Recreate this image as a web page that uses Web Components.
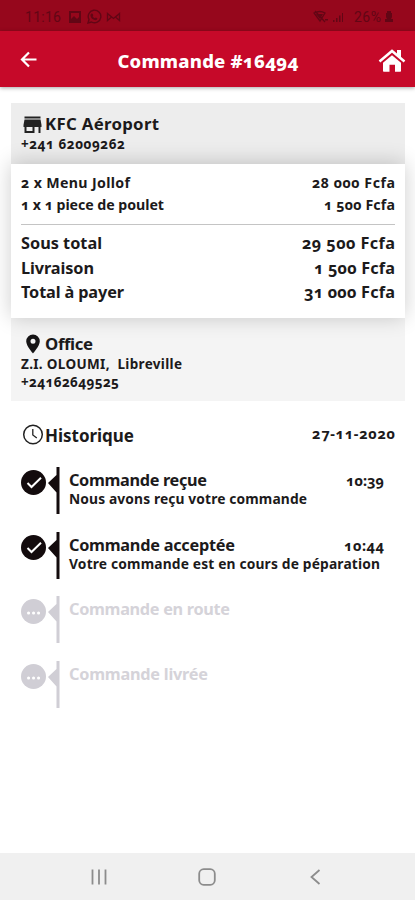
<!DOCTYPE html>
<html lang="fr">
<head>
<meta charset="utf-8">
<title>Commande</title>
<style>
body {
  margin: 0;
  background: #fff;
  color: #1c1a1b;
  font-family: "Noto Sans", "Open Sans", sans-serif;
  font-weight: 700;
  font-variant-numeric: oldstyle-nums;
}
</style>
</head>
<body>
<order-screen></order-screen>

<script>
const define = (name, html, setup) => {
  const template = document.createElement("template");
  template.innerHTML = html;

  customElements.define(name, class extends HTMLElement {
    constructor() {
      super();
      this.attachShadow({ mode: "open" });
      this.shadowRoot.appendChild(template.content.cloneNode(true));
    }

    connectedCallback() {
      if (setup) setup(this);
    }
  });
};

// Tracks the text of a span so that it covers the given width
const track = (span, width, count) => {
  span.style.letterSpacing = "0";
  const gap = (width - span.getBoundingClientRect().width) / (count - 1);
  span.style.letterSpacing = `${gap}px`;
  span.style.marginRight = `${-gap}px`;
};

define("fit-text", `
<style>
:host { display: block; flex: none; }
span { display: inline-block; white-space: pre; vertical-align: top; }
</style>
<span><slot></slot></span>
`, (el) => {
  const span = el.shadowRoot.querySelector("span");
  track(span, Number(el.getAttribute("width")), el.textContent.length);
});

define("status-bar", `
<style>
:host {
  display: flex;
  justify-content: space-between;
  align-items: center;
  box-sizing: border-box;
  height: 31px;
  padding: 2px 21px 0 25px;
  background: #96071c;
  color: #620615;
  font: 400 14px Roboto, sans-serif;
  font-variant-numeric: normal;
}
div { display: flex; align-items: center; }
svg { display: block; fill: currentColor; }
.left svg:first-of-type { margin-left: 7px; }
.left svg + svg { margin-left: 4px; }
.right svg + svg { margin: 0 10px 0 2px; }
.right fit-text + svg { margin-left: 3px; }
</style>
<div class="left">
  <fit-text width="36">11:16</fit-text>
  <svg width="14" height="14" viewBox="0 0 14 14"><path fill-rule="evenodd" d="M1 1h12v12H1zM3 3v6l3-3 3 3 2-2V3z"/></svg>
  <svg width="16" height="16" viewBox="0 0 16 16"><path d="M2 14l1-3.500A6.300 6.300 0 1 1 5.500 13z" fill="none" stroke="currentColor" stroke-width="1.400"/><path d="M5.300 4.500l1.400.2.600 1.700-.7.800q.8 1.500 2.200 2.100l.9-.8 1.700.8q-.1 1.800-2 1.900-4.600-1-5-5.300z"/></svg>
  <svg width="15" height="12" viewBox="0 0 15 12"><path d="M1.500 2.500v7l4-3.500zM13.500 2.500v7L9.500 6zM1.500 2.500l6 5 6-5M1.500 9.500l4-3.500M13.500 9.500l-4-3.500" fill="none" stroke="currentColor" stroke-width="1.300"/></svg>
</div>
<div class="right">
  <svg width="16" height="14" viewBox="0 0 16 14"><path d="M1 3q6-3 11 0L7 11zM2 1l10 11" fill="none" stroke="currentColor" stroke-width="1.300"/><path d="M3 4h7l-3 5zM12 9h3v1.500h-3z"/></svg>
  <svg width="13" height="12" viewBox="0 0 13 12"><path d="M2 9h1.500v2H2zM5 7h1.500v4H5zM8 4.500h1.500V11H8zM11 2h1v9h-1z"/></svg>
  <fit-text width="27">26%</fit-text>
  <svg width="10" height="14" viewBox="0 0 10 14"><path d="M3 1h4v2h1v4l-1 2h2v3H1V9h2L2 7V3h1z"/></svg>
</div>
`);

define("app-header", `
<style>
:host {
  display: flex;
  justify-content: space-between;
  align-items: center;
  box-sizing: border-box;
  height: 56px;
  padding: 2px 9px 0 20px;
  background: #c60929;
  color: #fff;
  font-size: 18.500px;
  font-weight: 800;
  box-shadow: 0 1px 4px rgba(0, 0, 0, .35);
}
svg { display: block; }
</style>
<svg width="18" height="18" viewBox="0 0 18 18"><path d="M16.500 8.500H2.500M9 1.500l-7 7 7 7" fill="none" stroke="#fff" stroke-width="2.200"/></svg>
<span><slot></slot></span>
<svg width="28" height="24" viewBox="0 0 28 24"><path d="M14 7.300l9 7.500V23a.8.8 0 0 1-.8.800H17v-7h-5.500v7H5.800A.8.8 0 0 1 5 23v-8.200z" fill="#fff"/><path d="M1.500 13.500L14 3l12.500 10.500" fill="none" stroke="#fff" stroke-width="2.500"/><path d="M19 2h4v8l-4-3.400z" fill="#fff"/></svg>
`, (el) => {
  track(el.shadowRoot.querySelector("span"), 181, el.textContent.length);
});

define("contact-card", `
<style>
:host {
  display: block;
  box-sizing: border-box;
  background: var(--card-bg, #f4f4f4);
  padding: var(--card-pad, 0) 10px 0;
  font-size: 13.500px;
  line-height: 18px;
}
.name {
  display: flex;
  align-items: center;
  height: 22px;
  font-size: 16.800px;
}
.icon { width: 24px; flex: none; }
::slotted(svg) { display: block; }
</style>
<div class="name"><div class="icon"><slot name="icon"></slot></div><slot name="name"></slot></div>
<slot></slot>
`);

define("price-row", `
<style>
:host {
  display: flex;
  justify-content: space-between;
  align-items: center;
  height: var(--row, 24.400px);
}
</style>
<slot></slot>
`);

define("order-summary", `
<style>
:host {
  display: block;
  position: relative;
  box-sizing: border-box;
  height: 154px;
  padding: 7px 10px 0;
  background: #fff;
  box-shadow: 0 -1px 20px rgba(0, 0, 0, .2);
  font-size: 16.300px;
}
.items { --row: 22.500px; font-size: 14.200px; }
hr { height: 1px; margin: 8px 0 6px; border: 0; background: #c4c4c4; }
</style>
<div class="items"><slot name="items"></slot></div>
<hr>
<slot></slot>
`);

define("history-step", `
<style>
:host {
  display: flex;
  height: 64.700px;
  color: #1c1a1b;
  --tone: #130b0d;
}
:host([pending]) { color: #d5d3d9; --tone: #d0ced5; }
svg { display: block; flex: none; margin-right: 9px; }
.mark { fill: var(--tone); }
.dots { display: none; }
:host([pending]) .dots { display: inline; }
:host([pending]) .check { display: none; }
.text { flex: 1; padding: 3px 21px 0 0; font-size: 13.800px; line-height: 18px; }
.head { display: flex; justify-content: space-between; height: 20px; line-height: 20px; font-size: 16.300px; }
::slotted([slot="time"]) { font-size: 14.500px; }
</style>
<svg width="39" height="47" viewBox="0 0 39 47">
  <circle class="mark" cx="12.500" cy="15.500" r="12.500"/>
  <path class="mark" d="M35.500 0H38.500V47H35.500V25.500L27 16l8.500-8z"/>
  <path class="check" d="M6.500 16l4 4L20 10.800" fill="none" stroke="#fff" stroke-width="2"/>
  <path class="dots" d="M7.500 17h.1M12.500 17h.1M17.500 17h.1" stroke="#fff" stroke-width="3" stroke-linecap="round"/>
</svg>
<div class="text">
  <div class="head"><slot name="title"></slot><slot name="time"></slot></div>
  <slot></slot>
</div>
`);

define("nav-bar", `
<style>
:host {
  display: flex;
  justify-content: center;
  align-items: center;
  gap: 90px;
  height: 47px;
  padding-right: 2px;
  background: #f0f0f0;
}
svg { display: block; fill: none; stroke: #8c8c8c; stroke-width: 1.800; }
</style>
<svg width="18" height="18" viewBox="0 0 18 18"><path d="M2.500 1.500v15M9 1.500v15M15.500 1.500v15"/></svg>
<svg width="18" height="18" viewBox="0 0 18 18"><rect x="1.200" y="1.200" width="15.600" height="15.600" rx="4.500"/></svg>
<svg width="18" height="18" viewBox="0 0 18 18"><path d="M13.500 2l-8 7 8 7"/></svg>
`);

define("order-screen", `
<style>
:host { display: flex; flex-direction: column; height: 900px; overflow: hidden; }
app-header { flex: none; }
main { flex: 1; padding: 16px 10px 0 11px; }
.shop { height: 61px; --card-bg: #ededed; --card-pad: 10px; }
.address { height: 83px; --card-pad: 15px; }
.history {
  display: flex;
  justify-content: space-between;
  align-items: center;
  height: 24px;
  margin: 22px 0 20px;
  padding: 0 10px;
  font-size: 17px;
}
.history div { display: flex; align-items: center; gap: 1px; }
.date { font-size: 14.500px; margin-bottom: 4px; }
history-step { margin-left: 10px; }
</style>
<status-bar></status-bar>
<app-header>Commande #16494</app-header>
<main>
  <contact-card class="shop">
    <svg slot="icon" width="22" height="20" viewBox="0 0 22 20"><path fill-rule="evenodd" d="M3.500 2.500h16v2h-16zM3.500 5.500h16l1 5.500v2h-1v6h-2v-6h-4v6h-10v-6h-1v-2zM5.500 13v4h6v-4z" fill="#222"/></svg>
    <fit-text slot="name" width="114">KFC Aéroport</fit-text>
    <fit-text width="104">+241 62009262</fit-text>
  </contact-card>
  <order-summary>
    <price-row slot="items"><fit-text width="109">2 x Menu Jollof</fit-text><fit-text width="83">28 000 Fcfa</fit-text></price-row>
    <price-row slot="items"><fit-text width="143">1 x 1 piece de poulet</fit-text><fit-text width="71">1 500 Fcfa</fit-text></price-row>
    <price-row><fit-text width="81">Sous total</fit-text><fit-text width="93">29 500 Fcfa</fit-text></price-row>
    <price-row><fit-text width="73">Livraison</fit-text><fit-text width="81">1 500 Fcfa</fit-text></price-row>
    <price-row><fit-text width="103">Total à payer</fit-text><fit-text width="91">31 000 Fcfa</fit-text></price-row>
  </order-summary>
  <contact-card class="address">
    <svg slot="icon" width="24" height="20" viewBox="0 0 24 20"><path fill-rule="evenodd" d="M12 .5a6.800 6.800 0 0 0-6.800 6.800C5.200 12 12 19.500 12 19.500S18.800 12 18.800 7.300A6.800 6.800 0 0 0 12 .5zm0 4.300a2.500 2.500 0 1 1 0 5 2.500 2.500 0 0 1 0-5z" fill="#161415"/></svg>
    <fit-text slot="name" width="48">Office</fit-text>
    <fit-text width="161">Z.I. OLOUMI,  Libreville</fit-text>
    <fit-text width="98">+24162649525</fit-text>
  </contact-card>
  <div class="history">
    <div>
      <svg width="23" height="22" viewBox="0 0 23 22"><circle cx="12" cy="10.500" r="9.300" fill="none" stroke="#222" stroke-width="1.500"/><path d="M11.800 5v6l4 3" fill="none" stroke="#222" stroke-width="1.300"/></svg>
      <fit-text width="89">Historique</fit-text>
    </div>
    <fit-text class="date" width="83">27-11-2020</fit-text>
  </div>
  <history-step>
    <fit-text slot="title" width="138">Commande reçue</fit-text>
    <fit-text slot="time" width="38">10:39</fit-text>
    <fit-text width="238">Nous avons reçu votre commande</fit-text>
  </history-step>
  <history-step>
    <fit-text slot="title" width="166">Commande acceptée</fit-text>
    <fit-text slot="time" width="40">10:44</fit-text>
    <fit-text width="311">Votre commande est en cours de péparation</fit-text>
  </history-step>
  <history-step pending>
    <fit-text slot="title" width="161">Commande en route</fit-text>
  </history-step>
  <history-step pending>
    <fit-text slot="title" width="139">Commande livrée</fit-text>
  </history-step>
</main>
<nav-bar></nav-bar>
`);
</script>
</body>
</html>
